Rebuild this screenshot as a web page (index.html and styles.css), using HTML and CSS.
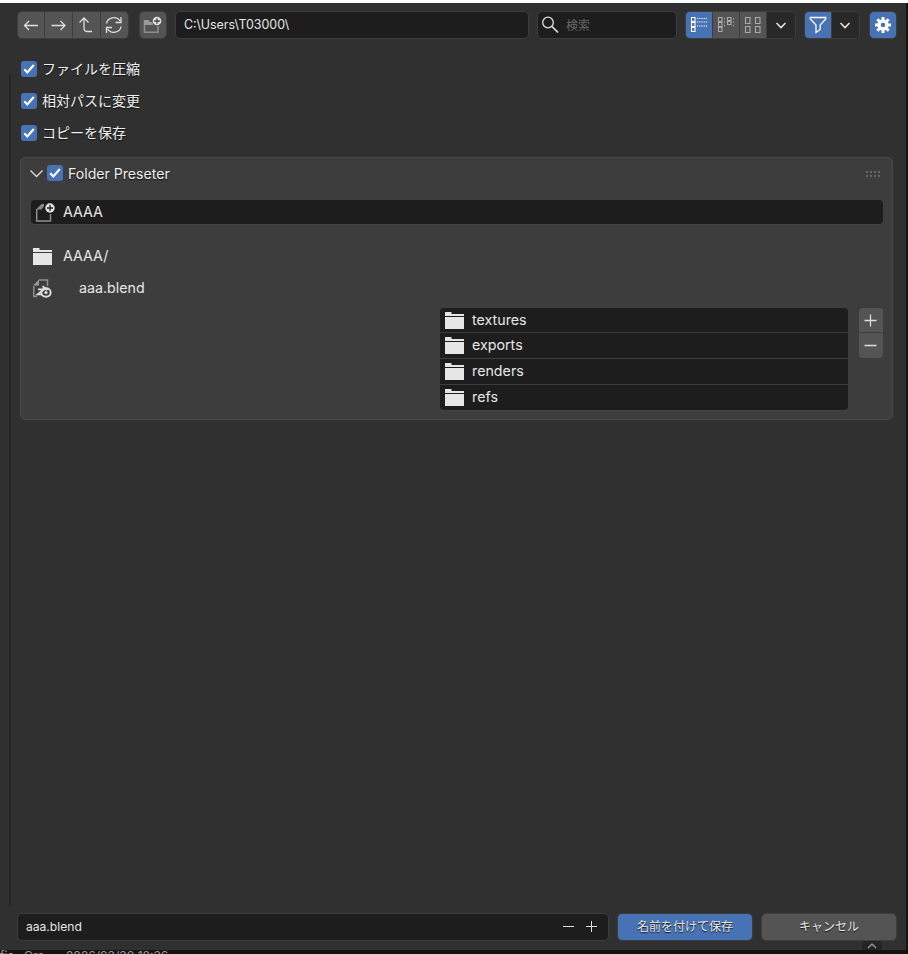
FILE: index.html
```
<!DOCTYPE html>
<html lang="ja">
<head>
<meta charset="utf-8">
<title>Blender File View</title>
<link rel="stylesheet" href="styles.css">
</head>
<body>
<svg class="defs" width="0" height="0">
  <defs>
    <symbol id="folder" viewBox="0 0 19 17"><path d="M0 0h6.500v2H19v2H0zM0 5h19v12H0z" fill="#e6e6e6"/></symbol>
    <symbol id="tick" viewBox="0 0 16 16"><path d="M3.300 8.200 6.300 11.400 12.800 4" fill="none" stroke="#fff" stroke-width="2.200"/></symbol>
    <symbol id="down" viewBox="0 0 12 12"><path d="M1.500 4 6 8.500 10.500 4" fill="none" stroke="#e2e2e2" stroke-width="1.600"/></symbol>
  </defs>
</svg>
<div class="window">
  <header class="toolbar">
    <div class="group nav">
      <button><svg width="26" height="26"><path d="M6.500 13.500H20M11 9 6.500 13.500l4.500 4.500"/></svg></button>
      <button><svg width="26" height="26"><path d="M5.500 13.500H19M14.500 9l4.500 4.500-4.500 4.500"/></svg></button>
      <button><svg width="26" height="26"><path d="M5.500 10.500l4.500-4.500 4.500 4.500M10 6v10q0 3.500 3.500 3.500h4.500"/></svg></button>
      <button><svg width="26" height="26"><path d="M4.500 11.500a7.300 6.800 0 0 1 13.500-2.500M19 5v5.500h-5.500M19 14.500a7.300 6.800 0 0 1-13.500 2.500M4.500 21v-5.500h5.500"/></svg></button>
    </div>
    <button class="solo newdir"><svg width="26" height="26"><path class="dim" d="M4.500 12v8.300H18V14M3.800 12.200h9"/><path d="M3.800 8h4.700l1.500 2h2.500v2.800H3.800z" fill="#999" stroke="none"/><circle cx="17" cy="9" r="4.300" fill="#e2e2e2" stroke="none"/><path d="M14.200 9h5.600M17 6.200v5.600" stroke="#444"/></svg></button>
    <div class="field path"><span>C:\Users\T03000\</span></div>
    <div class="field search"><svg width="20" height="20"><circle cx="7" cy="7.500" r="5.300"/><path d="M11 11.500l6 6" stroke-width="1.700"/></svg><span>検索</span></div>
    <div class="group views">
      <button class="on"><svg width="26" height="26"><path d="M5.500 5.500H9v4H5.500zM5.500 10.500H9v4H5.500zM5.500 15.500H9v4H5.500z"/><path stroke-dasharray="1.200 1" d="M11 6.500h10.500M11 10h10.500M11 14h10.500"/></svg></button>
      <button><svg class="soft" width="26" height="26"><path d="M5.500 5.500H9v4H5.500zM5.500 10.500H9v4H5.500zM5.500 15.500H9v4H5.500zM14.500 5.500H18v3h-3.500zM14.500 9.500H18v3h-3.500z"/><path stroke-dasharray="1.200 2.300" d="M11.500 6v9M20.500 6v9"/></svg></button>
      <button><svg class="soft" width="26" height="26"><path d="M5.500 5.500H10v6H5.500zM15.500 5.500H20v6h-4.500zM5.500 14.500H10v6H5.500zM15.500 14.500H20v6h-4.500z"/></svg></button>
      <button class="menu"><svg width="12" height="12"><use href="#down"/></svg></button>
    </div>
    <div class="group filter">
      <button class="on"><svg width="26" height="26"><path d="M5.300 5.500h15.400v1.500l-5.500 6v4.500L11 20.500V13L5.300 7z"/></svg></button>
      <button class="menu"><svg width="12" height="12"><use href="#down"/></svg></button>
    </div>
    <button class="solo gear on"><svg width="26" height="26"><path stroke-width="3" d="M13 5v3.500M13 17.500V21M5 13h3.500M17.500 13H21M7.300 7.300l2.500 2.500M16.200 16.200l2.500 2.500M7.300 18.700l2.500-2.500M16.200 9.800l2.500-2.500"/><circle cx="13" cy="13" r="4" stroke-width="3.400"/></svg></button>
  </header>
  <main class="content">
    <label class="check"><span class="box"><svg width="16" height="16"><use href="#tick"/></svg></span><span class="name">ファイルを圧縮</span></label>
    <label class="check"><span class="box"><svg width="16" height="16"><use href="#tick"/></svg></span><span class="name">相対パスに変更</span></label>
    <label class="check"><span class="box"><svg width="16" height="16"><use href="#tick"/></svg></span><span class="name">コピーを保存</span></label>
    <section class="panel">
      <div class="panel-head">
        <svg class="expand" width="14" height="10"><path d="M.5 2.500l6 6 6-6"/></svg>
        <span class="box"><svg width="16" height="16"><use href="#tick"/></svg></span><span class="title">Folder Preseter</span>
        <svg class="grip" width="15" height="7"><path stroke-dasharray="2 2" stroke-width="2" d="M0 2h15M0 6h15"/></svg>
      </div>
      <div class="preset"><svg width="20" height="20"><path class="dim" d="M1.700 7v12H15.500v-7"/><path d="M1 7.500 6.500 2H9v2L6.500 7.500z" fill="#888" stroke="none"/><circle cx="15" cy="6" r="4.700" fill="#e2e2e2" stroke="none"/><path d="M12 6h6M15 3v6" stroke="#222"/></svg><span>AAAA</span></div>
      <div class="line root"><svg width="19" height="17"><use href="#folder"/></svg><span>AAAA/</span></div>
      <div class="line file"><svg width="20" height="20"><path class="dim" d="M1.700 8v10.500H5M15.500 8V2H7"/><path d="M1 7.500l6-6v6z" fill="#999" stroke="none"/><path d="M6 11.300h7.500M10.500 8.300l5 3.700M12 11.500l-6.500 5h4" stroke-width="1.700"/><ellipse cx="14" cy="14.500" rx="4.700" ry="4.200" stroke-width="1.900"/><circle cx="14" cy="14.500" r="1.600" fill="#e6e6e6" stroke="none"/></svg><span>aaa.blend</span></div>
      <div class="tree">
        <ul class="folders">
          <li><svg width="19" height="17"><use href="#folder"/></svg><span>textures</span></li>
          <li><svg width="19" height="17"><use href="#folder"/></svg><span>exports</span></li>
          <li><svg width="19" height="17"><use href="#folder"/></svg><span>renders</span></li>
          <li><svg width="19" height="17"><use href="#folder"/></svg><span>refs</span></li>
        </ul>
        <div class="edit">
          <button><svg width="14" height="14"><path d="M.5 7.500h12M6.500 1.500v12"/></svg></button>
          <button><svg width="14" height="14"><path d="M.5 6.500h12"/></svg></button>
        </div>
      </div>
    </section>
  </main>
  <footer class="bottom">
    <div class="field filename"><span>aaa.blend</span><svg width="36" height="12"><path d="M1 5.500h11M24 5.500h11M29.500 0v11"/></svg></div>
    <button class="action save"><span>名前を付けて保存</span></button>
    <button class="action cancel"><span>キャンセル</span></button>
  </footer>
  <div class="corner"><svg width="10" height="6"><path d="M1 5l4-4 4 4"/></svg></div>
  <div class="rail"></div>
</div>
<div class="behind"><span class="a">fic</span><span class="b">Gro</span><span class="c">2026/03/30 18:36</span></div>
</body>
</html>
```
FILE: styles.css
```
* { box-sizing: border-box; }
body { margin: 0; width: 908px; height: 954px; overflow: hidden; background: #141414; border-top: 3px solid #fbfffd; color: #e6e6e6; font-family: Inter, "Noto Sans CJK JP", sans-serif; font-size: 14px; }
svg { display: block; flex: none; fill: none; stroke: #dedede; stroke-width: 1.3; }
.defs { position: absolute; }
use { stroke: none; }
button { border: 0; padding: 0; margin: 0; font: inherit; color: inherit; background: #545454; display: flex; align-items: center; justify-content: center; }
.window { position: relative; width: 906px; height: 947px; background: #303030; display: flex; flex-direction: column; }
.toolbar { display: flex; height: 44px; padding: 8px 0 0 17px; }
.group { display: flex; height: 28px; gap: 1px; border: 1px solid #3d3d3d; border-radius: 5px; overflow: hidden; background: #3d3d3d; }
.nav { width: 112px; margin-right: 10px; }
.nav button { width: 26px; }
.nav button:nth-child(n+2) { width: 27px; }
.nav button:last-child { flex: 1; }
.solo { width: 28px; height: 28px; border: 1px solid #3d3d3d; border-radius: 5px; }
.newdir { margin-right: 8px; }
.dim { stroke: #8e8e8e; stroke-width: 1.5; }
.soft { stroke: #aaa; }
.on { background: #4772b3; }
.on svg { stroke: #fff; }
.views svg { stroke-width: 1.1; }
.field { display: flex; align-items: center; height: 28px; background: #1d1d1d; border: 1px solid #3d3d3d; border-radius: 5px; font-size: 12.4px; }
.path { width: 354px; padding-left: 8px; margin-right: 8px; }
.search { width: 140px; padding-left: 3px; margin-right: 8px; color: #666; font-size: 12px; }
.search span { margin-left: 5px; }
.path span, .search span { padding-bottom: 2px; }
.views { width: 111px; margin-right: 8px; }
.views button { width: 26px; }
.filter { width: 56px; margin-right: 9px; }
.filter button { width: 26px; }
.group .menu { flex: 1; background: #282828; padding-right: 1px; }
.content { flex: 1; padding: 6px 13px 0 20px; }
.check { display: flex; align-items: center; height: 32px; padding-left: 1px; gap: 5px; color: #f0f0f0; text-shadow: 0 1px 1px #111; }
.name { padding-bottom: 2px; }
.box { width: 16px; height: 16px; background: #4772b3; border-radius: 3px; }
.panel { margin-top: 8px; height: 263px; background: #3d3d3d; border: 1px solid #4a4a4a; border-radius: 5px; padding: 0 9px; font-size: 14.25px; }
.panel-head { display: flex; align-items: center; height: 32px; margin-top: -1px; font-size: 14.1px; color: #f0f0f0; text-shadow: 0 1px 1px #111; }
.expand { margin-right: 3px; }
.title { margin-left: 5px; }
.grip { margin-left: auto; margin-right: 2px; stroke: #666; }
.preset { display: flex; align-items: center; margin-top: 11px; height: 24px; padding-left: 4px; margin-left: 1px; border-radius: 4px; background: #1d1d1d; box-shadow: 0 1px #444; }
.preset span { margin-left: 8px; padding-bottom: 1px; }
.line { display: flex; align-items: center; height: 32px; padding-left: 3px; }
.root { margin-top: 16px; }
.line span { margin-left: 11px; padding-bottom: 2px; }
.file { padding-left: 2px; }
.file span { margin-left: 27px; }
.tree { display: flex; justify-content: flex-end; gap: 11px; margin-top: 4px; }
.folders { list-style: none; margin: 0; padding: 0; width: 408px; height: 102px; display: grid; grid-template-rows: 24px 25px 25px 25px; gap: 1px; background: #3d3d3d; border-radius: 4px; overflow: hidden; box-shadow: 0 1px #444; }
.folders li { display: flex; align-items: center; gap: 8px; padding-left: 5px; background: #1d1d1d; }
.folders span { padding-bottom: 2px; }
.edit { width: 24px; height: 50px; display: grid; grid-template-rows: 24px 25px; gap: 1px; border-radius: 4px; overflow: hidden; }
.bottom { display: flex; height: 37px; padding-left: 17px; }
.filename { width: 592px; padding: 0 10px 0 8px; justify-content: space-between; font-size: 12.1px; }
.filename span { padding-bottom: 2px; }
.filename svg { stroke-width: 1; }
.action { height: 28px; border: 1px solid #3d3d3d; border-radius: 5px; font-size: 12px; text-shadow: 0 1px 1px #111; }
.action span { padding-bottom: 3px; }
.save { width: 136px; background: #4772b3; margin-left: 8px; }
.cancel { width: 136px; margin-left: 8px; }
.corner { position: absolute; left: 862px; bottom: 0; width: 20px; height: 9px; background: #242424; display: flex; align-items: center; justify-content: center; border-radius: 4px 4px 0 0; }
.corner svg { stroke: #999; }
.rail { position: absolute; left: 9px; top: 71px; width: 2px; height: 832px; background: #262626; }
.behind { display: flex; height: 4px; overflow: hidden; color: #999; font-size: 12px; line-height: 12px; }
.a { width: 24px; }
.b { width: 42px; }
```
